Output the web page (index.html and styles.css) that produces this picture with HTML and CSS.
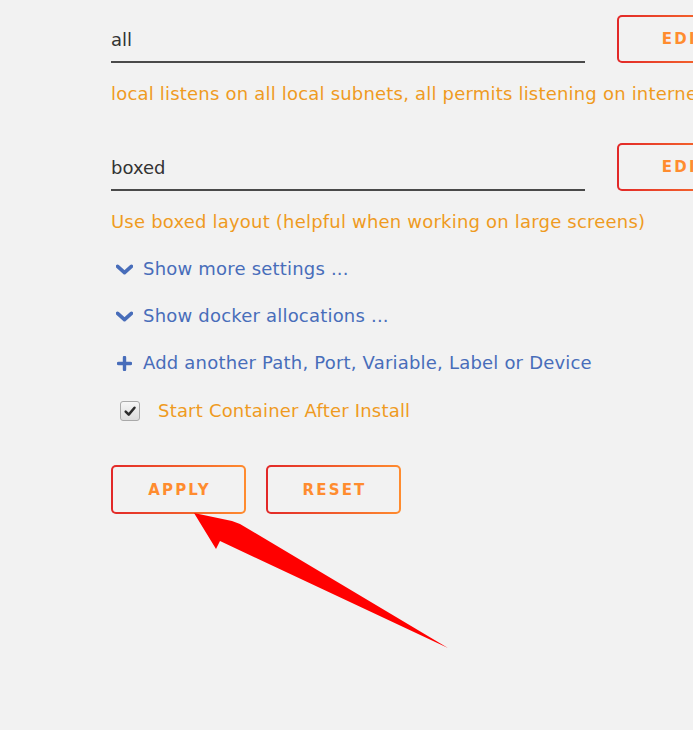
FILE: index.html
```html
<!DOCTYPE html>
<html lang="en">
<head>
<meta charset="utf-8">
<title>Add Container</title>
<link rel="stylesheet" href="styles.css">
</head>
<body>
<main class="form">
  <div class="field-row">
    <div class="input">all</div>
    <button class="btn" type="button">EDIT</button>
  </div>
  <p class="help">local listens on all local subnets, all permits listening on internet interfaces</p>

  <div class="field-row next">
    <div class="input">boxed</div>
    <button class="btn" type="button">EDIT</button>
  </div>
  <p class="help">Use boxed layout (helpful when working on large screens)</p>

  <a class="link first">
    <svg class="ico chev" viewBox="0 0 16 10"><path d="M1.5 2 L8 8 L14.5 2" fill="none" stroke="currentColor" stroke-width="3.4" stroke-linecap="round" stroke-linejoin="round"/></svg>
    <span>Show more settings ...</span>
  </a>
  <a class="link">
    <svg class="ico chev" viewBox="0 0 16 10"><path d="M1.5 2 L8 8 L14.5 2" fill="none" stroke="currentColor" stroke-width="3.4" stroke-linecap="round" stroke-linejoin="round"/></svg>
    <span>Show docker allocations ...</span>
  </a>
  <a class="link">
    <svg class="ico plus" viewBox="0 0 15 15"><path d="M7.5 1.5 V13.5 M1.5 7.5 H13.5" fill="none" stroke="currentColor" stroke-width="3.4" stroke-linecap="round"/></svg>
    <span>Add another Path, Port, Variable, Label or Device</span>
  </a>

  <label class="check">
    <span class="box"><svg viewBox="0 0 20 20"><path d="M5.2 10.6 L8.6 14 L15 6.4" fill="none" stroke="#2b2b2b" stroke-width="2.8" stroke-linecap="round" stroke-linejoin="round"/></svg></span>
    <span class="check-text">Start Container After Install</span>
  </label>

  <div class="actions">
    <button class="btn" type="button">APPLY</button>
    <button class="btn" type="button">RESET</button>
  </div>
</main>

<svg class="pointer" viewBox="0 0 693 730" width="693" height="730">
  <polygon points="194,513 232,521 240,524 448,648 220,541 216,549" fill="#ff0000"/>
</svg>
</body>
</html>
```

FILE: styles.css
```css
html, body {
  margin: 0;
  padding: 0;
  background: #f2f2f2;
  overflow: hidden;
}

body {
  width: 693px;
  height: 730px;
  position: relative;
  font-family: "DejaVu Sans", "Noto Sans", sans-serif;
  font-size: 18px;
  letter-spacing: 0.2px;
}

.form {
  padding: 15px 0 0 111px;
  display: flex;
  flex-direction: column;
  align-items: flex-start;
}

.field-row {
  display: flex;
  align-items: stretch;
  gap: 32px;
  height: 48px;
  white-space: nowrap;
}

.field-row.next {
  margin-top: 37px;
}

.input {
  width: 474px;
  border-bottom: 2px solid #4a4a4a;
  color: #333;
  box-sizing: border-box;
  height: 48px;
  line-height: 50px;
  letter-spacing: 0;
}

.btn {
  flex: none;
  width: 135px;
  height: 48px;
  border: 2px solid transparent;
  border-radius: 5px;
  background:
    linear-gradient(#f2f2f2, #f2f2f2) padding-box,
    linear-gradient(90deg, #e22828 0%, #ff8c2f 100%) border-box;
  color: #ff8c2f;
  font-family: "DejaVu Sans", "Noto Sans", sans-serif;
  font-weight: 700;
  font-size: 15px;
  letter-spacing: 2.2px;
  padding: 0 0 0 2px;
  text-align: center;
  box-sizing: border-box;
}

.help {
  margin: 19px 0 0 0;
  line-height: 24px;
  color: #ef9b1f;
  white-space: nowrap;
}

.link {
  display: flex;
  align-items: center;
  gap: 10px;
  margin-top: 23px;
  line-height: 24px;
  color: #486dba;
  white-space: nowrap;
}

.ico {
  flex: none;
  display: block;
}

.ico.chev {
  width: 17px;
  height: 11px;
  margin-left: 5px;
  margin-right: 0;
}

.ico.plus {
  width: 15px;
  height: 15px;
  margin-left: 6px;
  margin-right: 1px;
}

.check {
  display: flex;
  align-items: center;
  gap: 18px;
  margin-top: 24px;
  margin-left: 9px;
  line-height: 24px;
  color: #ef9b1f;
}

.box {
  width: 20px;
  height: 20px;
  box-sizing: border-box;
  border: 1px solid #a9a9a9;
  border-radius: 3px;
  background: linear-gradient(#f6f6f6, #dcdcdc);
  display: block;
}

.box svg {
  display: block;
  width: 18px;
  height: 18px;
}

.actions {
  display: flex;
  gap: 20px;
  margin-top: 42px;
}

.actions .btn {
  height: 49px;
}

.pointer {
  position: absolute;
  left: 0;
  top: 0;
  pointer-events: none;
}
```
